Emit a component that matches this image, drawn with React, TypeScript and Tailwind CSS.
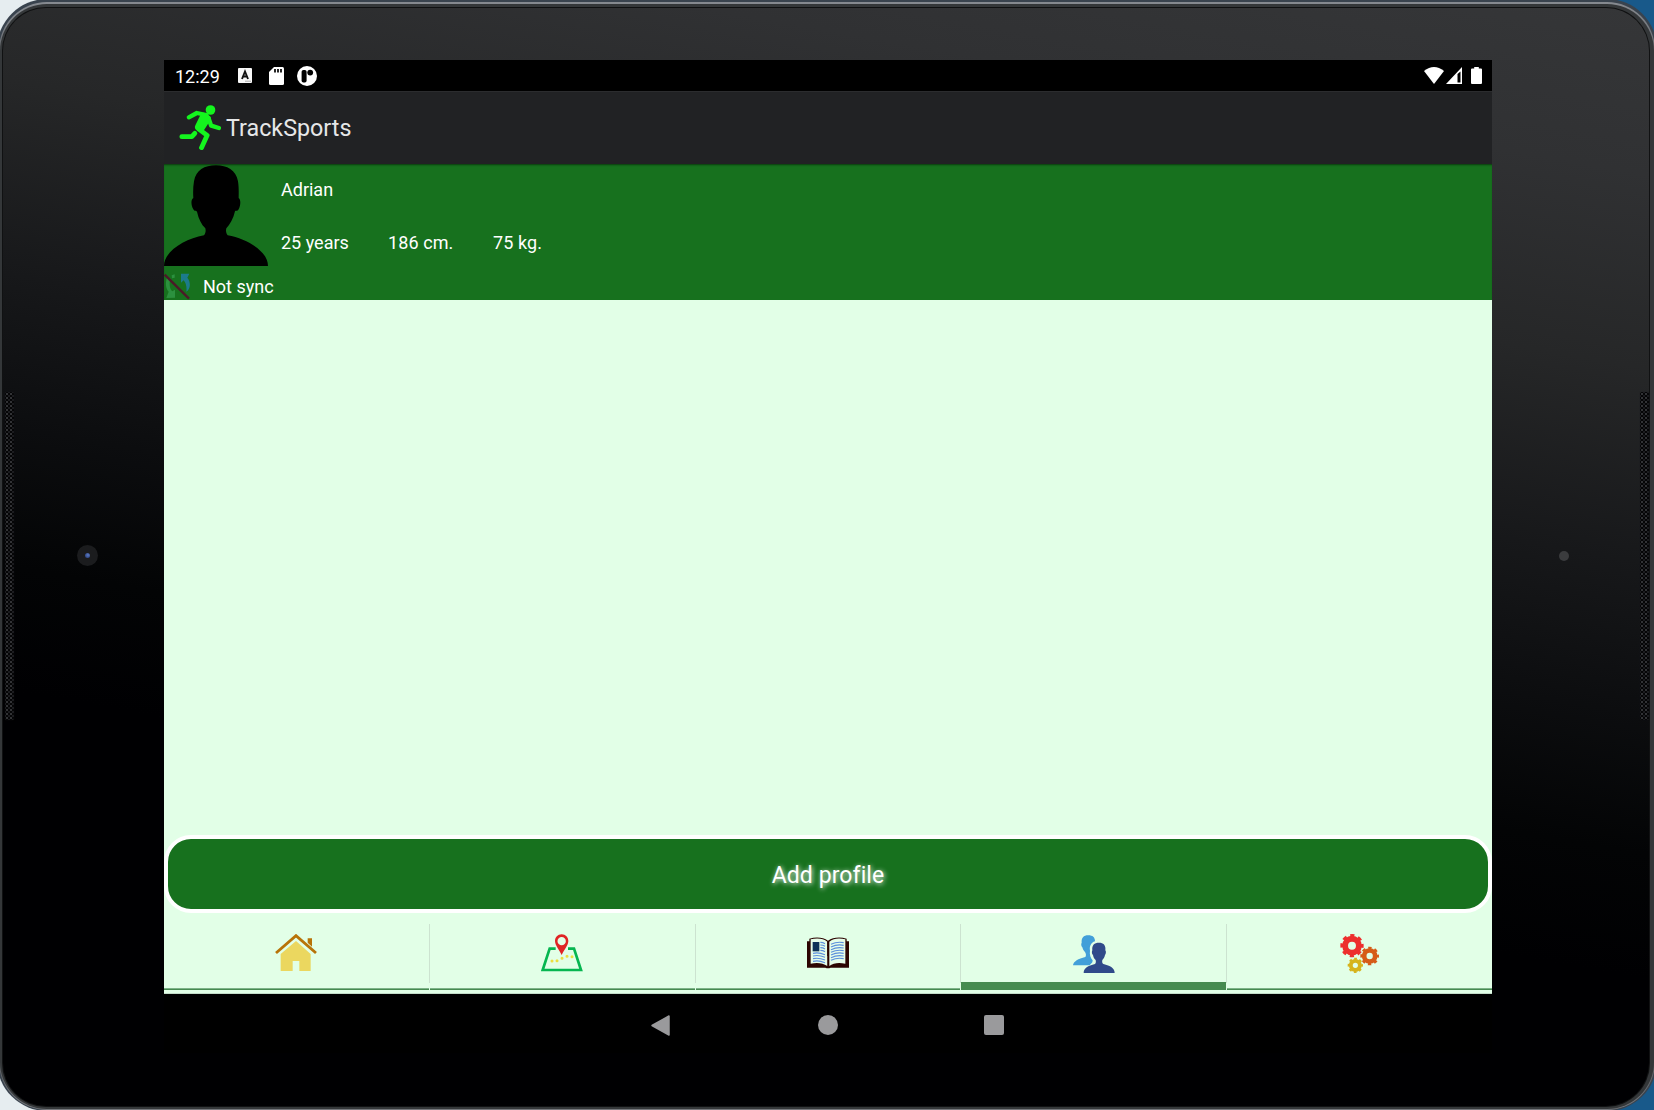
import React from "react";

function Runner() {
  return (
    <svg className="h-[45px] w-[42px]" viewBox="88 165 125 135" fill="none" stroke="#14f51e" strokeLinecap="round" strokeLinejoin="round">
      <circle cx="182" cy="180" r="14.5" fill="#14f51e" stroke="none" />
      <path d="M117 202 L141 189 L170 195" strokeWidth="13" />
      <path d="M176 204 L184 227 L207 234" strokeWidth="13" />
      <path d="M162 200 L171 206 L153 234 L147 231 Z" strokeWidth="23" />
      <path d="M148 238 L172 256 L155 293" strokeWidth="14.5" />
      <path d="M96 260 L126 260 L135 250" strokeWidth="14.5" />
    </svg>
  );
}

function Avatar() {
  return (
    <svg className="mt-px h-[101px] w-[104px] shrink-0" viewBox="42 29 312 303">
      <path d="M198 30 C231 30 258 44 264 78 C267 98 266 115 266 128 C273 132 272 151 266 162 C262 169 256 165 255 168 C250 190 240 207 229 219 C227 226 228 234 233 240 C293 251 354 288 354 332 L42 332 C42 288 104 251 162 240 C167 234 168 226 166 219 C154 207 146 191 141 169 C138 166 134 169 130 162 C123 151 122 132 130 128 C129 113 129 95 132 78 C138 44 163 30 198 30 Z" fill="#000" />
    </svg>
  );
}

function NotSync() {
  return (
    <svg className="-mt-px h-[27px] w-[26px] shrink-0" viewBox="42 355 78 81">
      <path d="M51 368 C45 388 48 402 56 411 L49 430 L75 429 L75 405 L67 410 C58 402 57 384 62 372 Z" fill="#2c913f" />
      <path d="M65 362 l9 -3 v10 l-8 2 Z" fill="#2c913f" />
      <path d="M93 357 L118 357 L112 369 C123 382 122 403 109 411 C111 398 108 385 101 377 L93 384 Z" fill="#1c7b8b" />
      <path d="M44 360 L117 432" stroke="#4b1a28" strokeWidth="7" />
    </svg>
  );
}

function House() {
  return (
    <svg className="h-[38px] w-[42px]" viewBox="376 329 126 114">
      <path d="M474 342 H487 V367 L474 355 Z" fill="#b87308" />
      <path d="M439 350 L483 389 V440 H449 V410 H429 V440 H393 V389 Z" fill="#ebd75f" />
      <path d="M379 386 L439 334 L499 386" fill="none" stroke="#b87308" strokeWidth="8.5" />
    </svg>
  );
}

function RouteMap() {
  return (
    <svg className="h-[38px] w-[42px]" viewBox="64 74 126 114" fill="none">
      <path d="M108 118 H90 L69 182 H184 L163 118 H145" stroke="#06b650" strokeWidth="8" />
      <path d="M97 155 h0.1 M112 154 h0.1 M127 147 h0.1 M142 141 h0.1 M157 142 h0.1" stroke="#ecdf3f" strokeWidth="9" strokeLinecap="round" />
      <path d="M126 75 C114 75 106 84 106 95 C106 108 118 120 126 137 C134 120 146 108 146 95 C146 84 138 75 126 75 Z M126 83 A12.5 12.5 0 1 1 126 108 A12.5 12.5 0 1 1 126 83 Z" fill="#e02424" fillRule="evenodd" />
    </svg>
  );
}

function Book() {
  return (
    <svg className="h-[32px] w-[42px]" viewBox="861 83 126 96">
      <path d="M861 96 H868 V88 C889 82 910 84 924 94 C938 84 960 82 980 88 V96 H987 V175 H932 Q924 179 916 175 H861 Z" fill="#2c0502" />
      <path d="M872 90 C891 85 910 87 922 97 V170 C908 160 890 159 872 163 Z M976 90 C957 85 940 87 928 97 V170 C940 160 958 159 976 163 Z" fill="#e6fde9" />
      <path d="M924 96 V140" stroke="#2c0502" strokeWidth="5" />
      <path d="M924 140 V170" stroke="#2c0502" strokeWidth="2" />
      <rect x="878" y="98" width="20" height="28" fill="#0d3157" />
      <path d="M901 99 q8 0 14 4 M901 107 q8 0 14 4 M901 115 q8 0 14 4 M901 123 q8 0 14 4 M879 132 q17 -4 36 4 M879 140 q17 -4 36 4 M879 148 q17 -4 36 4 M879 156 q17 -4 36 4 M933 105 q18 -9 38 -5 M933 113 q18 -9 38 -5 M933 121 q18 -9 38 -5 M933 129 q18 -9 38 -5 M933 137 q18 -9 38 -5 M933 145 q18 -9 38 -5 M933 153 q18 -9 38 -5" fill="none" stroke="#5b8fdc" strokeWidth="3.4" />
    </svg>
  );
}

function People() {
  return (
    <svg className="h-[38px] w-[42px]" viewBox="99 79 126 114">
      <path d="M145 80 C158 80 165 86 165 98 C152 102 148 114 150 126 C148 138 152 148 158 155 L157 161 L149 170 H99 C100 158 115 150 136 145 C139 141 138 135 135 130 C130 126 128 120 127 116 C123 111 123 105 125 102 C124 88 130 80 145 80 Z" fill="#429fd9" />
      <path d="M177 102 C190 102 198 109 196 125 C199 128 198 136 195 139 C194 146 190 151 187 154 C186 159 186 163 190 166 C211 171 224 179 224 193 H131 C131 179 144 171 165 166 C168 163 168 159 167 154 C163 151 160 146 159 139 C155 136 155 128 157 125 C155 109 163 102 177 102 Z" fill="#304a8a" />
    </svg>
  );
}

type GearProps = { cx: number; cy: number; r: number; color: string };

function Gear({ cx, cy, r, color }: GearProps) {
  const step = (2 * Math.PI * r * 0.87) / 8;
  return (
    <g fill="none" stroke={color}>
      <circle cx={cx} cy={cy} r={r * 0.59} strokeWidth={r * 0.5} />
      <circle cx={cx} cy={cy} r={r * 0.87} strokeWidth={r * 0.26} strokeDasharray={`${step * 0.52} ${step * 0.48}`} strokeDashoffset={step * 0.26} />
    </g>
  );
}

function Gears() {
  return (
    <svg className="h-[39px] w-[40px]" viewBox="900 71 120 117">
      <Gear cx={936} cy={106} r={35} color="#ed2f2d" />
      <Gear cx={989} cy={137} r={28} color="#d65c18" />
      <Gear cx={946} cy={165} r={23} color="#d6b41c" />
    </svg>
  );
}

function StatusBar() {
  return (
    <div className="flex h-[31px] items-center bg-black pr-[10px] pl-[11px] text-[18px] text-white">
      <span className="w-[63px] pt-[2px] leading-none">12:29</span>
      <svg className="h-[15px] w-[14px]" viewBox="0 0 14 15">
        <rect width="14" height="15" rx="1" fill="#f8f8f8" />
        <path d="M4 11 L7 3.5 L10 11 M5 8.5 H9" fill="none" stroke="#111" strokeWidth="1.9" />
        <path d="M7 13.2 h6" stroke="#aaa" strokeWidth="1" />
      </svg>
      <svg className="ml-[17px] h-[18px] w-[15px]" viewBox="0 0 15 18">
        <path d="M5 0 H13.5 Q15 0 15 1.5 V16.5 Q15 18 13.5 18 H1.5 Q0 18 0 16.5 V5 Z" fill="#fff" />
        <path d="M6 2 v3.6 M9 2 v3.6 M12 2 v3.6" stroke="#000" strokeWidth="1.7" />
      </svg>
      <svg className="ml-[13px] h-[20px] w-[20px]" viewBox="0 0 20 20">
        <circle cx="10" cy="10" r="10" fill="#fff" />
        <rect x="4.6" y="4" width="5" height="12.5" rx="1.8" fill="#000" />
        <circle cx="13.2" cy="6.6" r="2.9" fill="#000" />
      </svg>
      <svg className="ml-auto h-[17px] w-[20px]" viewBox="0 0 20 17">
        <path d="M0 4 Q10 -4 20 4 L10 17 Z" fill="#fff" />
      </svg>
      <svg className="ml-[2px] h-[17px] w-[16px]" viewBox="0 0 16 17">
        <path d="M16 0 V17 H0 Z M14.5 4.5 L11.5 7 V15.5 H14.5 Z" fill="#fff" fillRule="evenodd" />
      </svg>
      <svg className="ml-[9px] h-[17px] w-[11px]" viewBox="0 0 11 17">
        <path d="M3.2 0 H7.8 V1.6 H10 Q11 1.6 11 2.6 V16 Q11 17 10 17 H1 Q0 17 0 16 V2.6 Q0 1.6 1 1.6 H3.2 Z" fill="#fff" />
      </svg>
    </div>
  );
}

function Profile() {
  return (
    <section className="h-[136px] bg-[#17711e] text-[18px] leading-none text-white shadow-[inset_0_2px_2px_-1px_#0a3a0e]">
      <div className="flex h-[101px]">
        <Avatar />
        <div className="ml-[13px] flex flex-col pt-[17px]">
          <span>Adrian</span>
          <div className="mt-[35px] flex whitespace-nowrap">
            <span className="w-[107px]">25 years</span>
            <span className="w-[105px] tracking-[0.1px]">186 cm.</span>
            <span className="tracking-[0.1px]">75 kg.</span>
          </div>
        </div>
      </div>
      <div className="flex h-[35px] items-center pt-[9px]">
        <NotSync />
        <span className="ml-[13px]">Not sync</span>
      </div>
    </section>
  );
}

const tabs = [
  { name: "Home", icon: <House />, active: false },
  { name: "Routes", icon: <RouteMap />, active: false },
  { name: "Journal", icon: <Book />, active: false },
  { name: "Profiles", icon: <People />, active: true },
  { name: "Settings", icon: <Gears />, active: false },
];

function TabBar() {
  return (
    <nav className="flex h-[81px] border-b border-[#c3dcc8]">
      {tabs.map((t, i) => (
        <React.Fragment key={t.name}>
          {i > 0 && <div className="mt-[11px] h-[59px] w-px shrink-0 bg-[#cce3d0]" />}
          <button aria-label={t.name} className="flex h-[77px] flex-1 flex-col">
            <span className={t.active ? "flex h-[69px] w-full shrink-0 items-center justify-center pt-[13px]" : "flex h-[75px] w-full shrink-0 items-center justify-center pt-[5px]"}>{t.icon}</span>
            <span className={t.active ? "h-[8px] w-full shrink-0 bg-[#468b50]" : "h-[2px] w-full shrink-0 border-t border-[#7db388] bg-[#468b50]"} />
          </button>
        </React.Fragment>
      ))}
    </nav>
  );
}

function Speaker() {
  return <div className="h-[328px] w-[9px] rounded-[2px] bg-[#050506] bg-[radial-gradient(circle,#333437_0.7px,transparent_1.1px),radial-gradient(circle,#242528_0.6px,transparent_1px)] bg-[size:4px_4px] bg-[position:0_0,2px_2px] shadow-[0_0_1px_0_#1c1d1e]" />;
}

export default function App() {
  return (
    <div className="h-[1110px] w-[1654px] overflow-hidden bg-[linear-gradient(90deg,#e6edf0_50%,#18598a_50%)]">
      <div className="-mx-[3px] -mt-px h-[1112px] rounded-[50px] bg-[#39434e] px-[2px] pt-[3px] pb-px">
        <div className="h-full rounded-[48px] bg-[linear-gradient(#868a90,#45484b_10%,#45484b_92%,#74777c)] px-px pt-[2px] pb-px">
          <div className="h-full rounded-[47px] bg-[#343739] pt-[3px] pr-[4px] pb-[2px] pl-[2px]">
            <div className="h-full rounded-[44px] bg-[#101112] p-px">
              <div className="flex h-full rounded-[43px] bg-[linear-gradient(190deg,#353638_0%,#303133_12%,#262728_26%,#17181a_40%,#0c0d0f_51%,#030405_61%,#000002_70%)]">
                <div className="flex w-[161px] shrink-0 items-center pb-[3px] pl-[2px]">
                  <Speaker />
                  <div className="ml-[63px] flex size-[21px] items-center justify-center rounded-full bg-[#1b1c1e]">
                    <div className="size-[5px] rounded-full bg-[radial-gradient(circle_at_60%_40%,#5d7bc0,#1d3372)]" />
                  </div>
                </div>
                <main className="mt-[52px] flex h-[993px] w-[1328px] shrink-0 flex-col bg-[#e2ffe7] font-[Roboto,sans-serif]">
                  <StatusBar />
                  <header className="flex h-[73px] shrink-0 items-center border-t border-[#2b2c2e] bg-[#212224] pb-[2px] pl-[15px]">
                    <Runner />
                    <h1 className="ml-[5px] pt-[4px] text-[23.3px] leading-none text-[#e6e7e8]">TrackSports</h1>
                  </header>
                  <Profile />
                  <div className="h-[535px]" />
                  <button className="h-[78px] shrink-0 rounded-[27px] border-4 border-white bg-[#17711e] pt-[3px] text-[23px] leading-none tracking-[0.1px] text-white [text-shadow:1px_1px_5px_#fff]">
                    Add profile
                  </button>
                  <TabBar />
                  <footer className="flex flex-1 items-center bg-black pt-[3px] pl-[487px]">
                    <svg className="h-[21px] w-[19px]" viewBox="0 0 19 21">
                      <path d="M18 1 V20 L1 10.5 Z" fill="#9a9a9c" stroke="#9a9a9c" strokeWidth="1.5" strokeLinejoin="round" />
                    </svg>
                    <span className="ml-[148px] size-[20px] rounded-full bg-[#9a9a9c]" />
                    <span className="ml-[146px] size-[20px] rounded-[2px] bg-[#9a9a9c]" />
                  </footer>
                </main>
                <div className="flex flex-1 items-center pb-[3px]">
                  <div className="ml-[67px] size-[10px] rounded-full bg-[#3b3c3e]" />
                  <div className="ml-auto">
                    <Speaker />
                  </div>
                </div>
              </div>
            </div>
          </div>
        </div>
      </div>
    </div>
  );
}
